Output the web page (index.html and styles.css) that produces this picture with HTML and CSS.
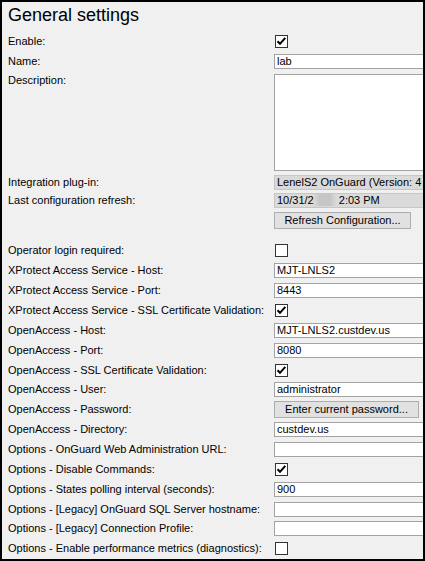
FILE: index.html
```html
<!DOCTYPE html>
<html>
<head>
<meta charset="utf-8">
<link rel="stylesheet" href="styles.css">
</head>
<body>
<div class="window">
  <div class="title">General settings</div>

  <div class="row"><span class="label">Enable:</span><span class="cb checked"><svg viewBox="0 0 13 13" width="13" height="13"><path d="M2.5 6.2 L5 8.8 L10.3 2.8" fill="none" stroke="#000" stroke-width="2"/></svg></span></div>
  <div class="row"><span class="label">Name:</span><span class="field">lab</span></div>
  <div class="row row-desc"><span class="label">Description:</span><span class="field area"></span></div>
  <div class="row row-ro"><span class="label">Integration plug-in:</span><span class="field ro">LenelS2 OnGuard (Version: 4</span></div>
  <div class="row row-ro"><span class="label">Last configuration refresh:</span><span class="field ro">10/31/2<span class="blur"></span> 2:03 PM</span></div>
  <div class="row row-btn"><span class="label"></span><span class="btn btn-refresh">Refresh Configuration...</span></div>

  <div class="row r"><span class="label">Operator login required:</span><span class="cb"></span></div>
  <div class="row r"><span class="label">XProtect Access Service - Host:</span><span class="field">MJT-LNLS2</span></div>
  <div class="row r"><span class="label">XProtect Access Service - Port:</span><span class="field">8443</span></div>
  <div class="row r"><span class="label">XProtect Access Service - SSL Certificate Validation:</span><span class="cb checked"><svg viewBox="0 0 13 13" width="13" height="13"><path d="M2.5 6.2 L5 8.8 L10.3 2.8" fill="none" stroke="#000" stroke-width="2"/></svg></span></div>
  <div class="row r"><span class="label">OpenAccess - Host:</span><span class="field">MJT-LNLS2.custdev.us</span></div>
  <div class="row r"><span class="label">OpenAccess - Port:</span><span class="field">8080</span></div>
  <div class="row r"><span class="label">OpenAccess - SSL Certificate Validation:</span><span class="cb checked"><svg viewBox="0 0 13 13" width="13" height="13"><path d="M2.5 6.2 L5 8.8 L10.3 2.8" fill="none" stroke="#000" stroke-width="2"/></svg></span></div>
  <div class="row r"><span class="label">OpenAccess - User:</span><span class="field">administrator</span></div>
  <div class="row r"><span class="label">OpenAccess - Password:</span><span class="btn btn-pass">Enter current password...</span></div>
  <div class="row r"><span class="label">OpenAccess - Directory:</span><span class="field">custdev.us</span></div>
  <div class="row r"><span class="label">Options - OnGuard Web Administration URL:</span><span class="field"></span></div>
  <div class="row r"><span class="label">Options - Disable Commands:</span><span class="cb checked"><svg viewBox="0 0 13 13" width="13" height="13"><path d="M2.5 6.2 L5 8.8 L10.3 2.8" fill="none" stroke="#000" stroke-width="2"/></svg></span></div>
  <div class="row r"><span class="label">Options - States polling interval (seconds):</span><span class="field">900</span></div>
  <div class="row r"><span class="label">Options - [Legacy] OnGuard SQL Server hostname:</span><span class="field"></span></div>
  <div class="row r"><span class="label">Options - [Legacy] Connection Profile:</span><span class="field"></span></div>
  <div class="row r"><span class="label">Options - Enable performance metrics (diagnostics):</span><span class="cb"></span></div>
</div>
</body>
</html>
```
FILE: styles.css
```css
html, body {
  margin: 0;
  padding: 0;
  background: #f0f0f0;
}

.window {
  width: 425px;
  height: 561px;
  box-sizing: border-box;
  border: 2px solid #000;
  background: #f0f0f0;
  overflow: hidden;
  padding: 3px 0 0 6px;
  font-family: "Liberation Sans", Arial, sans-serif;
  font-size: 11px;
  color: #000;
}

.title {
  font-size: 18px;
  line-height: 21px;
  height: 26px;
  white-space: nowrap;
}

.row {
  display: grid;
  grid-template-columns: 266px 170px;
  align-items: center;
  height: 20px;
}

.row.r {
  height: 19.87px;
}

.label {
  white-space: nowrap;
  line-height: 13px;
}

.field {
  display: block;
  box-sizing: border-box;
  height: 15px;
  border: 1px solid #a3a3a3;
  background: #fff;
  padding: 0 2px;
  line-height: 13px;
  white-space: nowrap;
  overflow: hidden;
}

.row-desc {
  height: 102px;
  align-items: start;
}

.row-desc .label {
  padding-top: 3px;
}

.field.area {
  height: 97px;
  margin-top: 3px;
}

.row-ro {
  height: 18px;
}

.field.ro {
  background: #dadada;
  border-color: #c6c6c6;
}

.blur {
  display: inline-block;
  width: 22px;
  height: 12px;
  vertical-align: -2px;
  background: linear-gradient(90deg, rgba(200,200,200,0), #c6c6c6 25%, #c6c6c6 75%, rgba(200,200,200,0));
}

.row-btn {
  height: 32px;
  align-items: start;
}

.btn {
  display: block;
  box-sizing: border-box;
  height: 17px;
  border: 1px solid #adadad;
  background: #e1e1e1;
  text-align: center;
  line-height: 15px;
  white-space: nowrap;
}

.btn-refresh {
  width: 137px;
  margin-top: 3px;
}

.btn-pass {
  width: 145px;
}

.cb {
  display: block;
  box-sizing: border-box;
  width: 13px;
  height: 13px;
  margin-left: 1px;
  border: 1px solid #333;
  background: #fff;
  position: relative;
}

.cb svg {
  position: absolute;
  left: -1px;
  top: -1px;
}
```
